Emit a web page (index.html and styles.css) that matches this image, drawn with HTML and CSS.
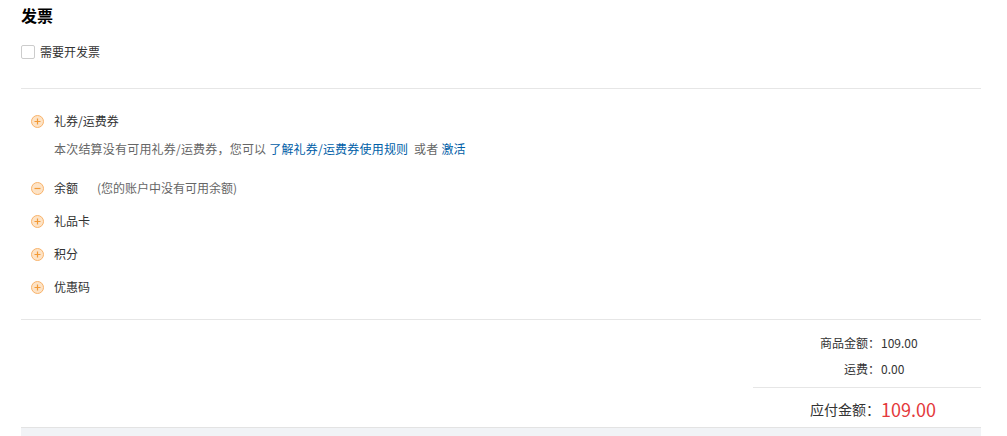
FILE: index.html
```html
<!DOCTYPE html>
<html lang="zh-CN">
<head>
    <meta charset="UTF-8">
    <title>发票</title>
    <link rel="stylesheet" href="styles.css">
</head>
<body>
<div class="page">
    <div class="invoice">
        <h3 class="title">发票</h3>
        <label class="need">
            <span class="box"></span>
            <span>需要开发票</span>
        </label>
    </div>
    <div class="coupons">
        <div class="item">
            <svg class="toggle" width="13" height="13" viewBox="0 0 13 13"><circle cx="6.5" cy="6.5" r="6" fill="#fde3c6" stroke="#f8b26a"/><path d="M3.5 6.5h6M6.5 3.5v6" stroke="#f39a36" stroke-width="1.2"/></svg>
            <span>礼券/运费券</span>
        </div>
        <div class="note">本次结算没有可用礼券/运费券，您可以 <a href="#">了解礼券/运费券使用规则</a> &nbsp;或者 <a href="#">激活</a></div>
        <div class="item gap-lg">
            <svg class="toggle" width="13" height="13" viewBox="0 0 13 13"><circle cx="6.5" cy="6.5" r="6" fill="#fde3c6" stroke="#f8b26a"/><path d="M3.5 6.5h6" stroke="#f39a36" stroke-width="1.2"/></svg>
            <span>余额</span>
            <span class="muted">(您的账户中没有可用余额)</span>
        </div>
        <div class="item">
            <svg class="toggle" width="13" height="13" viewBox="0 0 13 13"><circle cx="6.5" cy="6.5" r="6" fill="#fde3c6" stroke="#f8b26a"/><path d="M3.5 6.5h6M6.5 3.5v6" stroke="#f39a36" stroke-width="1.2"/></svg>
            <span>礼品卡</span>
        </div>
        <div class="item">
            <svg class="toggle" width="13" height="13" viewBox="0 0 13 13"><circle cx="6.5" cy="6.5" r="6" fill="#fde3c6" stroke="#f8b26a"/><path d="M3.5 6.5h6M6.5 3.5v6" stroke="#f39a36" stroke-width="1.2"/></svg>
            <span>积分</span>
        </div>
        <div class="item">
            <svg class="toggle" width="13" height="13" viewBox="0 0 13 13"><circle cx="6.5" cy="6.5" r="6" fill="#fde3c6" stroke="#f8b26a"/><path d="M3.5 6.5h6M6.5 3.5v6" stroke="#f39a36" stroke-width="1.2"/></svg>
            <span>优惠码</span>
        </div>
    </div>
    <div class="summary">
        <div class="sum-box">
            <div class="line">
                <span class="label">商品金额：</span>
                <span class="value">109.00</span>
            </div>
            <div class="line">
                <span class="label">运费：</span>
                <span class="value">0.00</span>
            </div>
            <div class="line total">
                <span class="label">应付金额：</span>
                <span class="value">109.00</span>
            </div>
        </div>
    </div>
    <div class="bar"></div>
</div>
</body>
</html>
```

FILE: styles.css
```css
body {
    margin: 0;
    background: #FFF;
    font-family: "Microsoft YaHei", "Noto Sans CJK SC", "Liberation Sans", sans-serif;
    font-size: 12px;
    color: #333;
}
.page {
    width: 960px;
    margin-left: 21px;
}
.invoice {
    padding-bottom: 26px;
    border-bottom: 1px solid #e6e6e6;
}
.title {
    margin: 0;
    height: 30px;
    line-height: 30px;
    font-size: 16px;
    font-weight: bold;
    color: #000;
}
.need {
    display: flex;
    align-items: center;
    margin-top: 12px;
    height: 20px;
    line-height: 20px;
    color: #333;
}
.need .box {
    width: 12px;
    height: 12px;
    border: 1px solid #ccc;
    border-radius: 2px;
    margin-right: 5px;
}
.coupons {
    padding: 22px 0 22px 10px;
    border-bottom: 1px solid #e6e6e6;
}
.item {
    display: flex;
    align-items: center;
    height: 20px;
    line-height: 20px;
    margin-top: 13px;
    color: #333;
}
.item:first-child {
    margin-top: 0;
}
.item.gap-lg {
    margin-top: 19px;
}
.toggle {
    margin-right: 10px;
    flex: none;
}
.muted {
    margin-left: 19px;
    color: #666;
}
.note {
    margin-top: 8px;
    padding-left: 23px;
    height: 20px;
    line-height: 20px;
    color: #666;
    letter-spacing: 0.2px;
}
.note a {
    color: #005ea7;
    text-decoration: none;
}
.summary {
    display: flex;
    justify-content: flex-end;
    padding-top: 13px;
}
.sum-box {
    width: 228px;
}
.line {
    display: flex;
    height: 20px;
    line-height: 20px;
    margin-bottom: 6px;
}
.line .label {
    width: 127px;
    text-align: right;
    color: #333;
}
.line .value {
    padding-left: 1px;
    color: #333;
}
.line:nth-child(2) {
    margin-bottom: 0;
    padding-bottom: 8px;
    border-bottom: 1px solid #e6e6e6;
    height: 20px;
}
.line.total {
    margin-top: 9px;
    height: 24px;
    line-height: 24px;
    margin-bottom: 6px;
}
.line.total .label {
    font-size: 14px;
}
.line.total .value {
    font-size: 18px;
    color: #e4393c;
}
.bar {
    height: 10px;
    background: #f1f3f6;
    border-top: 1px solid #e3e3e3;
}
```
